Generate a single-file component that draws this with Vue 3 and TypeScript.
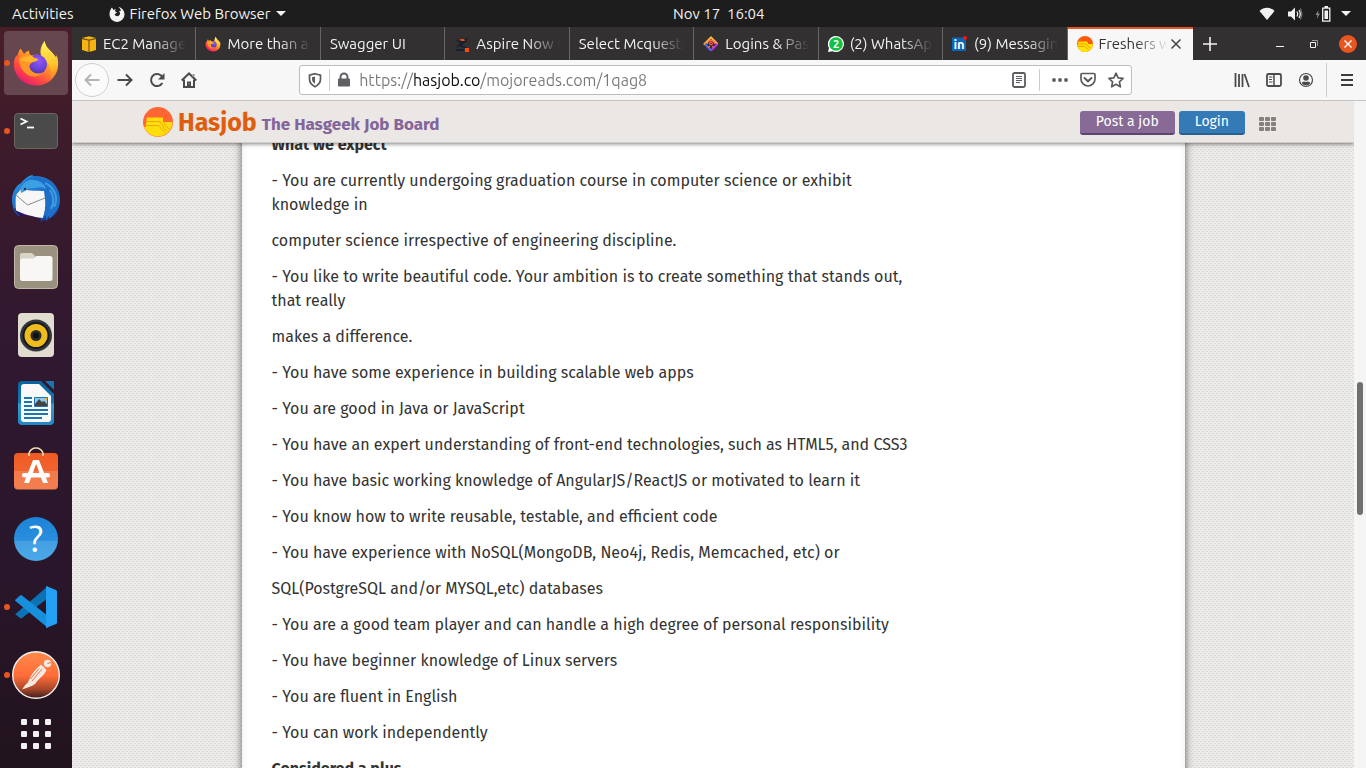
<script setup lang="ts">
import { ref } from 'vue'

interface Tab {
  title: string
  icon: string
}

interface DockApp {
  name: string
  running?: boolean
}

const tabs: Tab[] = [
  { title: 'EC2 Manage', icon: 'ec2' },
  { title: 'More than a', icon: 'firefox' },
  { title: 'Swagger UI', icon: '' },
  { title: 'Aspire Now G', icon: 'aspire' },
  { title: 'Select Mcquesti', icon: '' },
  { title: 'Logins & Pass', icon: 'logins' },
  { title: '(2) WhatsApp', icon: 'whatsapp' },
  { title: '(9) Messaging', icon: 'linkedin' },
]

const apps: DockApp[] = [
  { name: 'Firefox', running: true },
  { name: 'Terminal', running: true },
  { name: 'Thunderbird' },
  { name: 'Files' },
  { name: 'Rhythmbox' },
  { name: 'Writer' },
  { name: 'Software' },
  { name: 'Help' },
  { name: 'Code', running: true },
  { name: 'Postman', running: true },
]

const paragraphs: string[] = [
  '- You are currently undergoing graduation course in computer science or exhibit knowledge in',
  'computer science irrespective of engineering discipline.',
  '- You like to write beautiful code. Your ambition is to create something that stands out, that really',
  'makes a difference.',
  '- You have some experience in building scalable web apps',
  '- You are good in Java or JavaScript',
  '- You have an expert understanding of front-end technologies, such as HTML5, and CSS3',
  '- You have basic working knowledge of AngularJS/ReactJS or motivated to learn it',
  '- You know how to write reusable, testable, and efficient code',
  '- You have experience with NoSQL(MongoDB, Neo4j, Redis, Memcached, etc) or',
  'SQL(PostgreSQL and/or MYSQL,etc) databases',
  '- You are a good team player and can handle a high degree of personal responsibility',
  '- You have beginner knowledge of Linux servers',
  '- You are fluent in English',
  '- You can work independently',
]

const address = ref('https://hasjob.co/mojoreads.com/1qag8')
const cells = [0, 1, 2, 3, 4, 5, 6, 7, 8]
</script>

<template>
  <div class="desktop">
    <svg class="defs" width="0" height="0" aria-hidden="true">
      <defs>
        <linearGradient id="fxBody" x1="0.8" y1="0.1" x2="0.2" y2="1">
          <stop offset="0" stop-color="#ffe84a" />
          <stop offset="0.4" stop-color="#ff9a26" />
          <stop offset="0.7" stop-color="#ff4a40" />
          <stop offset="1" stop-color="#e4127e" />
        </linearGradient>
        <linearGradient id="fxTail" x1="0.5" y1="0" x2="0.6" y2="1">
          <stop offset="0" stop-color="#fff45a" />
          <stop offset="0.6" stop-color="#ffc72e" />
          <stop offset="1" stop-color="#ff8a1e" />
        </linearGradient>
        <radialGradient id="fxGlobe" cx="0.6" cy="0.3" r="0.8">
          <stop offset="0" stop-color="#9059ff" />
          <stop offset="0.6" stop-color="#6640d0" />
          <stop offset="1" stop-color="#41309c" />
        </radialGradient>
        <symbol id="firefox" viewBox="0 0 48 48">
          <path d="M8.500 9.500c1 1.300 2.500 3.500 3.500 5.500 1.600-1.700 3.500-2.900 5-3.500 0 2 .7 4 2 5 3.500-1.500 7.500-.5 10-.5-1.500-4 0-9.500 3.500-14 .7 4.500 3 7 6.500 10.500 3 3 5 5.500 5 5.500.7-.5.4-1.500.3-2.500C46 19 46.500 23 46 27.500 45 38.500 35.500 46.500 24 46.500S1.800 37.500 1.800 25.500c0-4 1.200-7.500 3.200-9.500-.2 1 0 2 .2 2.500.3-3.500 1.500-6.500 3.300-9z" fill="url(#fxBody)" />
          <path d="M32.500 2c.7 4.500 3 7 6.500 10.500 4 4 6.500 9 6 15-.4 5-3 9-7 12 2-5 1.500-11-2-15.500-4-4-9-7-6-15.500z" fill="url(#fxTail)" />
          <circle cx="25" cy="25.500" r="10" fill="url(#fxGlobe)" />
          <path d="M7 20c3-4.500 8-5 12-3.500 2 1 4 3.500 7 3.500.5 1-1.500 2.500-5 3-1.500 1-3.500 2-3.500 4.500.5 5.500 7 8.500 13 6-3.500 4.500-10.500 5.500-16 1.500C9.500 31 7 26 7 20z" fill="#ff9526" />
          <path d="M8 21c3-3 7-3.500 11-4.500 2 1 4 3.500 7 3.500-.5 1.500-2.500 2.500-5.500 3-3.500.5-7 0-12.500-2z" fill="#ffb52c" />
        </symbol>
        <linearGradient id="tbBlue" x1="0" y1="0" x2="0.6" y2="1">
          <stop offset="0" stop-color="#2c9be8" />
          <stop offset="0.6" stop-color="#1c6bc8" />
          <stop offset="1" stop-color="#1b3f9a" />
        </linearGradient>
        <linearGradient id="helpBlue" x1="0" y1="0" x2="0" y2="1">
          <stop offset="0" stop-color="#1b83d8" />
          <stop offset="0.53" stop-color="#2a8edc" />
          <stop offset="0.55" stop-color="#459fe2" />
          <stop offset="1" stop-color="#4aa8e8" />
        </linearGradient>
        <linearGradient id="bag" x1="0" y1="0" x2="0" y2="1">
          <stop offset="0" stop-color="#f15a22" />
          <stop offset="0.48" stop-color="#f0642f" />
          <stop offset="0.5" stop-color="#f27b4b" />
          <stop offset="1" stop-color="#f27e50" />
        </linearGradient>
        <linearGradient id="postman" x1="0" y1="0" x2="0" y2="1">
          <stop offset="0" stop-color="#ff8a4c" />
          <stop offset="0.52" stop-color="#ff6c37" />
          <stop offset="0.8" stop-color="#a8482a" />
          <stop offset="1" stop-color="#3c1c1c" />
        </linearGradient>
        <linearGradient id="writer" x1="0" y1="0" x2="0" y2="1">
          <stop offset="0" stop-color="#0b6399" />
          <stop offset="0.5" stop-color="#1678b4" />
          <stop offset="0.52" stop-color="#3a9ace" />
          <stop offset="1" stop-color="#2288c2" />
        </linearGradient>
        <symbol id="hasjob" viewBox="0 0 30 30">
          <circle cx="15" cy="15" r="15" fill="#ff6633" />
          <path d="M4 10.500h16v4.500h9.500c-.2 8-6.500 14.500-14.500 14.500C8.500 29.500 3 25.500 1 20h1.500z" fill="#ffdd0a" />
          <path d="M3.500 14.500h12.500c3.500 0 3.500 7 7.500 9.500M2.500 18.500h12c3 0 3.500 5 7.500 7M20 15c1 0 2 5 6.500 7" fill="none" stroke="#f4a513" stroke-width="1" />
        </symbol>
        <symbol id="hasjob-small" viewBox="0 0 16 16">
          <circle cx="8" cy="8" r="8" fill="#ff5a0a" />
          <path d="M1.500 5.500h8.500L11.500 8h4.400A8 8 0 0 1 .3 10.500z" fill="#ffe500" />
          <path d="M1 8h7.500c2 0 2 3 5 4M1 10.500h6.500c2 0 2 2.500 4 3" fill="none" stroke="#f59a10" stroke-width="1" />
        </symbol>
      </defs>
    </svg>

    <header class="topbar">
      <div class="topbar-left">
        <button type="button">Activities</button>
        <button type="button" class="app-menu">
          <svg width="16" height="16" viewBox="0 0 16 16" aria-hidden="true">
            <path d="M3 1.500 4.500 4c.8-.6 1.700-.8 2.500-.8-.7.600-1 1.300-1 2L8 6.500c-.6 1-2 1-2.300 1.800.4 1.700 2.400 2.400 4 1.500C11.500 8.600 11.500 6.500 10 5l2-.2C11.500 3 10.500 2 9.500 1c3 .3 6 3.500 6 7.300C15.500 12.500 12 16 8 16S.5 12.500.5 8.300C.5 5.500 1.500 3 3 1.500z" fill="#f2f2f2" />
          </svg>
          <span>Firefox Web Browser</span>
          <i class="caret"></i>
        </button>
      </div>
      <time class="clock">Nov 17&nbsp; 16:04</time>
      <div class="status">
        <svg width="16" height="14" viewBox="0 0 16 14" aria-hidden="true"><path d="M.5 4C5-.3 11-.3 15.500 4L8 13z" fill="#f2f2f2" /></svg>
        <svg width="16" height="16" viewBox="0 0 16 16" aria-hidden="true">
          <path d="M1 5.500h3l4-4v13l-4-4H1z" fill="#f2f2f2" />
          <path d="M10 5.500q1.500 2.500 0 5M12 4q2.500 4 0 8" fill="none" stroke="#f2f2f2" stroke-width="1.300" />
          <path d="M13.500 2.500q3 5.500 0 11" fill="none" stroke="#888" stroke-width="1" />
        </svg>
        <svg width="16" height="16" viewBox="0 0 16 16" aria-hidden="true">
          <path d="M3.500 4 .5 9h2l-.7 4L5 7.500H3z" fill="#8a8a8a" />
          <path d="M7.700 2.200h7.100v13H7.700z" fill="none" stroke="#f2f2f2" stroke-width="1.300" />
          <path d="M9.500 4.500h3.500v8.500H9.500zM9.500 0h3.500v2H9.500z" fill="#f2f2f2" />
        </svg>
        <i class="caret"></i>
      </div>
    </header>

    <nav class="dock" aria-label="Applications">
      <button v-for="app in apps" :key="app.name" type="button" class="launcher" :class="{ current: app.name === 'Firefox' }" :aria-label="app.name">
        <i v-if="app.running" class="dot"></i>
        <svg width="48" height="48" viewBox="0 0 48 48" aria-hidden="true">
          <use v-if="app.name === 'Firefox'" href="#firefox" width="48" height="48" />
          <g v-else-if="app.name === 'Terminal'">
            <rect x="2.500" y="6.500" width="43" height="35" rx="3.500" fill="#4a4a4a" stroke="#6b6660" />
            <path d="M8.500 11.500l6 3-6 3" fill="none" stroke="#fff" stroke-width="1.800" />
            <path d="M15 20.500h7" stroke="#fff" stroke-width="1.800" />
          </g>
          <g v-else-if="app.name === 'Thunderbird'">
            <path d="M9 8c3-4 7-7 11-8 1 .5 1.500 1 1.500 1.500C36 0 48 10 48 25c0 8-3 14-8 17l-3 1-2 3-3-1-4 2 1-3-16-6-6 3C2 38 0 31 0 25c0-7 3-12 6-15z" fill="url(#tbBlue)" />
            <path d="M2 33c2 5 5 8 10 10l-1-3 16 3z" fill="#2a1466" />
            <path d="M4 20l6-7c6 4 12 2 22 3l2 15-3 12C21 42 11 39 4 35.500c-.5-5-.5-11 0-15.500z" fill="#f7f7f8" />
            <path d="M4 20l11.500 10L33 23" fill="none" stroke="#85898f" stroke-width="1" />
            <path d="M9 18c-1-4 1-9 6-11 9-1 20 2 19 12l-1 14c0 4-1 7-2 10l3-3v5l3-4 .5 3C46 36 48 30 48 24 47 10 35 1 21.500 1.500 15 3 8 9 9 18z" fill="#1d6fc9" />
            <path d="M9 18c-.5-6 2-11 8-13 8-1 16 3 17 9-6-4-9 0-14-1-4 0-6 3-11 5z" fill="#3ba0e4" />
            <path d="M38 15c4 6 4 13 1 19M43 18c2 5 1 10-1 14M33 8c5 2 8 6 10 10" fill="none" stroke="#3f9ce0" stroke-width="2" />
            <circle cx="13" cy="14" r="1.300" fill="#432c34" />
          </g>
          <g v-else-if="app.name === 'Files'">
            <rect x="2.500" y="2.500" width="43" height="43" rx="4" fill="#9a917e" stroke="#c0b9a8" />
            <path d="M8 12q0-2 2-2h10l4 4v6H8z" fill="#d9d4c8" />
            <path d="M10.500 15.500H22l2.500-2.500H38q2.500 0 2.500 2.500v20q0 2.500-2.500 2.500H10.500Q8 38 8 35.500V18q0-2.500 2.500-2.500z" fill="#f8f7f5" />
          </g>
          <g v-else-if="app.name === 'Rhythmbox'">
            <rect x="6" y="2" width="36" height="44" rx="4" fill="#e0dcd0" />
            <circle cx="24" cy="24.500" r="16" fill="#33363b" />
            <circle cx="24" cy="24.500" r="13.500" fill="#17181c" />
            <circle cx="24" cy="24.500" r="11.500" fill="#efbc1d" />
            <circle cx="24" cy="24.500" r="5.500" fill="#2b2c2c" />
            <circle cx="24" cy="24.500" r="3" fill="#111" />
          </g>
          <g v-else-if="app.name === 'Writer'">
            <path d="M10 2h19l13 13v27q0 4-4 4H10q-4 0-4-4V6q0-4 4-4z" fill="url(#writer)" />
            <path d="M33 2h9v9z" fill="#1a74ad" />
            <path d="M12 5h15l12 12v23q0 3-3 3H12q-3 0-3-3V8q0-3 3-3z" fill="#f9f9f9" />
            <path d="M12 19h8M12 23h8M12 27h8M12 31h24M12 35h24M12 39h18" stroke="#1b76ae" stroke-width="2" />
            <path d="M22.500 18.500h13v9h-13z" fill="#8ec9ee" stroke="#1b76ae" />
            <path d="M23 27v-2l4-5 3 3 2-1 3 3v2z" fill="#444" />
            <path d="M32 19h3v3z" fill="#f5b81b" />
          </g>
          <g v-else-if="app.name === 'Software'">
            <rect x="2" y="6" width="44" height="36.500" rx="4" fill="url(#bag)" />
            <path d="M17 9V6q2-5 7-5t7 5v3" fill="none" stroke="#f4dcae" stroke-width="1.600" />
            <path d="M21 13h6l9 23h-5l-6.800-19L17 36h-5z" fill="#fff" />
            <rect x="10" y="26" width="28" height="4.500" rx="2.200" fill="#fff" />
          </g>
          <g v-else-if="app.name === 'Help'">
            <circle cx="24" cy="24" r="22" fill="url(#helpBlue)" />
            <text x="24" y="37" text-anchor="middle" font-size="37" fill="#fff">?</text>
          </g>
          <g v-else-if="app.name === 'Code'">
            <path d="M3 31l5 4c1 .5 1.500.5 2 0L36 15V3L3.500 31z" fill="#0b72b5" />
            <path d="M3 17l5-4.500c1-.5 1.500-.5 2 0L36 33v12L3.500 18z" fill="#1690dc" />
            <path d="M34 3l10 4q1 .5 1 1.500v31q0 1-1 1.500l-10 4z" fill="#23a0f4" />
          </g>
          <g v-else>
            <circle cx="24" cy="24" r="23.300" fill="url(#postman)" stroke="#f4eeee" stroke-width="1.400" />
            <circle cx="35.500" cy="12.500" r="3.700" fill="#f6e8e2" />
            <path d="M35.500 12.500l3.500-1" stroke="#e07040" stroke-width="1" />
            <path d="M29 13.500l5.500 5.500c-2 5-7 8-10 12l-6 3 2-4-5 2 2-4c2-5 6-10 11.500-14.500z" fill="#f6e8e2" />
            <path d="M24 29.500c2 4-6 6-14 9 4-6 7-9 14-9z" fill="#f6e8e2" />
            <path d="M30 18l-10 12M27 17.500L18.500 28" stroke="#e8764a" stroke-width="1" />
          </g>
        </svg>
      </button>
      <button type="button" class="show-apps" aria-label="Show Applications">
        <i v-for="cell in cells" :key="cell"></i>
      </button>
    </nav>

    <section class="browser">
      <div class="tabstrip">
        <div class="tabs" role="tablist">
          <button v-for="tab in tabs" :key="tab.title" type="button" role="tab" class="tab">
            <svg v-if="tab.icon" width="16" height="16" viewBox="0 0 16 16" aria-hidden="true">
              <g v-if="tab.icon === 'ec2'">
                <path d="M1 3l6.700 1.500V16L1 14zM15 3L8.300 4.500V16l6.700-2zM1 2l7-1.700L15 2 8 3.700z" fill="#f5b40f" />
                <path d="M1 2.600l7 1.600 7-1.600M8 4v12" fill="none" stroke="#8a6206" stroke-width="0.700" />
              </g>
              <use v-else-if="tab.icon === 'firefox'" href="#firefox" width="16" height="16" />
              <g v-else-if="tab.icon === 'aspire'">
                <path d="M1 4l7 1 6-4-2 5-4 3 5 3v1l-8-3-4 2 5-5z" fill="#17202c" />
                <path d="M2 13h8v2H2z" fill="#17202c" />
                <path d="M6 3h4l1 2H7z" fill="#f04a12" />
                <path d="M11 12h4v4h-4z" fill="#ff4a0a" />
              </g>
              <g v-else-if="tab.icon === 'logins'" fill="none" stroke-width="2">
                <path d="M2 9L1.500 8 8 1.500 14.500 8" stroke="#ffb13b" />
                <path d="M2 8l6 6.500" stroke="#4a6cf7" />
                <path d="M8 14.500L14.500 8" stroke="#b833e1" />
                <path d="M4.500 8a3.500 3.500 0 1 1 7 0M5.500 12l1-2M10.500 12l-1-2" stroke="#ff6a55" stroke-width="1.300" />
                <circle cx="8" cy="7.500" r="1.300" stroke="#ff4f5e" stroke-width="1.200" />
              </g>
              <g v-else-if="tab.icon === 'whatsapp'">
                <path d="M8 0a8 8 0 1 1-3.500 15.200L0 16l1-4A8 8 0 0 1 8 0z" fill="#fff" />
                <circle cx="8" cy="8" r="6.800" fill="#12c143" />
                <text x="8" y="12" text-anchor="middle" font-size="11" font-weight="700" fill="#fff">2</text>
              </g>
              <g v-else>
                <path d="M0 1.500h14V15H0z" fill="#0a66b7" />
                <text x="7" y="13" text-anchor="middle" font-size="13" font-weight="700" fill="#fff">in</text>
                <circle cx="13" cy="2" r="2" fill="#f11" />
              </g>
            </svg>
            <span class="tab-title">{{ tab.title }}</span>
          </button>
          <button type="button" role="tab" class="tab active" aria-selected="true">
            <svg width="16" height="16" aria-hidden="true"><use href="#hasjob-small" width="16" height="16" /></svg>
            <span class="tab-title">Freshers w</span>
            <svg class="tab-close" width="12" height="12" viewBox="0 0 12 12" aria-hidden="true"><path d="M1.500 1.500l9 9M10.500 1.500l-9 9" stroke="#444" stroke-width="1.500" /></svg>
          </button>
        </div>
        <button type="button" class="new-tab" aria-label="New tab">
          <svg width="16" height="16" viewBox="0 0 16 16" aria-hidden="true"><path d="M8 1v14M1 8h14" stroke="#f2f2f2" stroke-width="1.600" /></svg>
        </button>
        <div class="window-buttons">
          <button type="button" aria-label="Minimize"><svg width="18" height="18" viewBox="0 0 18 18"><path d="M5 11.500h8" stroke="#f2f2f2" /></svg></button>
          <button type="button" aria-label="Restore"><svg width="18" height="18" viewBox="0 0 18 18" fill="none"><path d="M5.500 7.500h5v5h-5z" stroke="#f2f2f2" /><path d="M7 5.500h5.500V11" stroke="#999" /></svg></button>
          <button type="button" aria-label="Close"><svg width="18" height="18" viewBox="0 0 18 18"><circle cx="9" cy="9" r="9" fill="#e95420" /><path d="M5.500 5.500l7 7M12.500 5.500l-7 7" stroke="#fff" stroke-width="1.300" /></svg></button>
        </div>
      </div>

      <div class="toolbar">
        <button type="button" class="back" aria-label="Back"><svg width="16" height="16" viewBox="0 0 16 16"><path d="M15.500 8H1.500M7 2.500L1.500 8 7 13.500" fill="none" stroke="#b4b4b4" stroke-width="2" /></svg></button>
        <button type="button" class="tool" aria-label="Forward"><svg width="16" height="16" viewBox="0 0 16 16"><path d="M.5 8h14M9 2.500L14.500 8 9 13.500" fill="none" stroke="#4b4b4e" stroke-width="2" /></svg></button>
        <button type="button" class="tool" aria-label="Reload">
          <svg width="16" height="16" viewBox="0 0 16 16"><path d="M13.300 11A6 6 0 1 1 12 3.500l1.500 2" fill="none" stroke="#4b4b4e" stroke-width="2" /><path d="M15.500 1v6.500H9z" fill="#4b4b4e" /></svg>
        </button>
        <button type="button" class="tool" aria-label="Home">
          <svg width="16" height="16" viewBox="0 0 16 16"><path d="M.7 8.500L8 1.500l7.300 7" fill="none" stroke="#4b4b4e" stroke-width="2" /><path d="M3 7.500V15h10V7.500" fill="none" stroke="#4b4b4e" stroke-width="2" /><path d="M6 9.500h4V15H6z" fill="#4b4b4e" /><path d="M7.500 11h1v1.500h-1zM11.500 2h2v3h-2z" fill="#999" /></svg>
        </button>
        <div class="spring"></div>
        <div class="urlbar">
          <svg width="16" height="16" viewBox="0 0 16 16" aria-hidden="true"><path d="M8 1.700l5.500 1.500v4c0 3.500-2.500 6-5.500 7.500-3-1.500-5.500-4-5.500-7.500v-4z" fill="none" stroke="#5c5c60" stroke-width="1.700" /><path d="M8 4.500v7.200C6 10.500 5 9 5 7V5.200z" fill="#5c5c60" /></svg>
          <i class="rule"></i>
          <svg width="16" height="16" viewBox="0 0 16 16" aria-hidden="true"><path d="M2.500 7h11v7h-11z" fill="#606064" stroke="#606064" stroke-linejoin="round" /><path d="M4.500 7V5a3.500 3.500 0 0 1 7 0v2" fill="none" stroke="#606064" stroke-width="2" /></svg>
          <input v-model="address" type="text" aria-label="Address" spellcheck="false" />
          <button type="button" aria-label="Reader view"><svg width="16" height="16" viewBox="0 0 16 16"><rect x="2" y="1" width="12" height="14" rx="1.500" fill="none" stroke="#5c5c60" stroke-width="1.800" /><path d="M5 4.500h6M5 6.500h6M5 8.500h6M5 10.500h4" stroke="#5c5c60" stroke-width="1" /></svg></button>
          <i class="rule"></i>
          <button type="button" aria-label="Page actions"><svg width="16" height="16" viewBox="0 0 16 16" fill="#5c5c60"><circle cx="2" cy="8" r="1.900" /><circle cx="8" cy="8" r="1.900" /><circle cx="14" cy="8" r="1.900" /></svg></button>
          <button type="button" aria-label="Save to Pocket"><svg width="16" height="16" viewBox="0 0 16 16" fill="none" stroke="#5c5c60"><path d="M1 2.500q0-1 1-1h12q1 0 1 1V7a7 7 0 0 1-14 0z" stroke-width="1.700" /><path d="M4.500 6L8 9.300 11.500 6" stroke-width="2" stroke-linecap="round" /></svg></button>
          <button type="button" aria-label="Bookmark"><svg width="16" height="16" viewBox="0 0 16 16"><path d="M8 1.200l2.100 4.600 5 .6-3.700 3.400 1 5L8 12.300l-4.400 2.500 1-5L.9 6.400l5-.6z" fill="none" stroke="#5c5c60" stroke-width="1.700" stroke-linejoin="round" /></svg></button>
        </div>
        <div class="spring"></div>
        <button type="button" class="tool" aria-label="Library"><svg width="16" height="16" viewBox="0 0 16 16"><path d="M1.500 1v14M5 2v13M8.500 2v13M10.500 2l4.500 13" fill="none" stroke="#4b4b4e" stroke-width="1.800" /></svg></button>
        <button type="button" class="tool" aria-label="Sidebars"><svg width="16" height="16" viewBox="0 0 16 16" fill="none" stroke="#4b4b4e"><rect x="1" y="2" width="14" height="12" rx="1.500" stroke-width="1.800" /><path d="M8 2v12" stroke-width="1.500" /><path d="M3 5h3.500M3 7.500h3M3 10h3.500" stroke-width="1" /></svg></button>
        <button type="button" class="tool" aria-label="Account"><svg width="16" height="16" viewBox="0 0 16 16"><circle cx="8" cy="8" r="6.500" fill="none" stroke="#4b4b4e" stroke-width="1.200" /><circle cx="8" cy="6" r="2.800" fill="#4b4b4e" /><path d="M3.500 11q1-1.500 2.500-1.500 2 .8 4 0 1.500 0 2.500 1.500-2 2.500-4.500 2.500T3.500 11z" fill="#4b4b4e" /></svg></button>
        <i class="rule tall"></i>
        <button type="button" class="tool menu" aria-label="Menu"><svg width="16" height="16" viewBox="0 0 16 16"><path d="M2 3h12M2 8h12M2 13h12" stroke="#3c3c3f" stroke-width="2" /></svg></button>
      </div>

      <div class="viewport">
        <div class="page">
          <header class="site-header">
            <div class="site-inner">
              <a href="#" class="brand">
                <svg width="30" height="30" aria-hidden="true"><use href="#hasjob" width="30" height="30" /></svg>
                <span class="brand-name">Hasjob</span>
                <span class="brand-tag">The Hasgeek Job Board</span>
              </a>
              <div class="site-actions">
                <button type="button" class="btn purple">Post a job</button>
                <button type="button" class="btn blue">Login</button>
                <button type="button" class="grid-button" aria-label="More sites"><i v-for="cell in cells" :key="cell"></i></button>
              </div>
            </div>
          </header>
          <main class="sheet">
            <article class="posting">
              <p><strong>What we expect</strong></p>
              <p v-for="text in paragraphs" :key="text">{{ text }}</p>
              <p><strong>Considered a plus</strong></p>
            </article>
          </main>
        </div>
        <div class="scrollbar"><i></i></div>
      </div>
    </section>
  </div>
</template>

<style>
body {
  overflow: hidden;
}
</style>

<style scoped>
* {
  box-sizing: border-box;
}

.desktop {
  display: grid;
  grid-template: 27px minmax(0, 1fr) / 72px minmax(0, 1fr);
  height: 100vh;
  overflow: hidden;
  font-family: Ubuntu, "Noto Sans", sans-serif;
  font-size: 15px;
}

.defs {
  position: absolute;
}

button {
  display: flex;
  align-items: center;
  justify-content: center;
  padding: 0;
  border: 0;
  background: none;
  color: inherit;
  font: inherit;
  white-space: nowrap;
}

svg {
  flex: none;
}

/* Desktop top bar */
.topbar {
  grid-column: 1 / -1;
  display: grid;
  grid-template-columns: calc(50% - 10px) auto 1fr;
  align-items: center;
  background: #1d1d1d;
  color: #f2f2f2;
}

.topbar-left {
  display: flex;
  gap: 35px;
  padding-left: 12px;
}

.app-menu {
  gap: 5px;
}

.caret {
  border: 5px solid transparent;
  border-top-color: #f2f2f2;
  border-bottom: 0;
}

.status {
  display: flex;
  align-items: center;
  justify-content: flex-end;
  gap: 12px;
  padding-right: 15px;
}

.status .caret {
  margin-left: -2px;
}

/* Launcher column */
.dock {
  display: flex;
  flex-direction: column;
  align-items: center;
  padding-top: 4px;
  gap: 4px;
  background: linear-gradient(#481f29, #3a1a2b 20%, #2f1830 45%, #29162a 75%, #21131d);
}

.launcher {
  position: relative;
  flex: none;
  width: 64px;
  height: 64px;
  border-radius: 4px;
}

.launcher.current {
  background: #67474f;
}

.dot {
  position: absolute;
  left: 0;
  width: 6px;
  height: 6px;
  border-radius: 3px;
  background: #e95420;
}

.show-apps {
  display: grid;
  grid-template-columns: repeat(3, 6px);
  gap: 6px;
  margin-top: 8px;
}

.show-apps i {
  height: 6px;
  border-radius: 1px;
  background: #f2f0f0;
}

/* Browser tabs */
.browser {
  display: flex;
  flex-direction: column;
  min-width: 0;
  min-height: 0;
}

.tabstrip {
  display: flex;
  flex: none;
  height: 33px;
  background: #323031;
  color: #f4f4f4;
}

.tabs {
  display: flex;
  flex: 1;
  min-width: 0;
}

.tab {
  flex: 1 1 0;
  min-width: 0;
  justify-content: flex-start;
  gap: 6px;
  padding: 0 9px;
  border-right: 1px solid #666465;
}

.tab-title {
  flex: 1;
  overflow: hidden;
  text-align: left;
  -webkit-mask-image: linear-gradient(to left, transparent, #000 32px);
  mask-image: linear-gradient(to left, transparent, #000 32px);
}

.tab.active {
  padding-right: 11px;
  border: 0;
  box-shadow: inset 0 2px #e95420;
  background: #f7f7f7;
  color: #333;
}

.tab-close {
  margin-left: -4px;
}

.new-tab {
  width: 34px;
}

.window-buttons {
  display: flex;
  align-items: center;
  gap: 16px;
  margin-left: 44px;
  padding-right: 9px;
}

/* Navigation toolbar */
.toolbar {
  display: flex;
  flex: none;
  align-items: center;
  height: 41px;
  padding: 0 3px;
  border-bottom: 1px solid #c4c4c4;
  background: #f7f7f7;
}

.back {
  width: 34px;
  height: 34px;
  border: 1px solid #cfcfcf;
  border-radius: 50%;
  background: #fbfbfb;
}

.tool {
  width: 32px;
  height: 32px;
}

.spring {
  flex: 3;
}

.urlbar {
  display: flex;
  flex: 26;
  align-items: center;
  gap: 12px;
  min-width: 0;
  height: 30px;
  padding: 0 7px;
  border: 1px solid #bdbdbd;
  border-radius: 3px;
  background: #fff;
}

.urlbar > svg:nth-of-type(2) {
  margin-left: -6px;
}

.urlbar > .rule:first-of-type {
  margin-left: -6px;
}

.rule {
  width: 1px;
  height: 22px;
  background: #ccc;
}

.rule.tall {
  height: 34px;
  margin: 0 4px;
}

.urlbar input {
  flex: 1;
  min-width: 0;
  height: 28px;
  margin-left: -5px;
  padding: 0;
  border: 0;
  outline: 0;
  background: linear-gradient(90deg, #777 54px, #0c0c0d 54px, #0c0c0d 121px, #777 121px);
  -webkit-background-clip: text;
  background-clip: text;
  -webkit-text-fill-color: transparent;
  font: inherit;
  font-size: 16px;
}

/* Web page */
.viewport {
  display: flex;
  flex: 1;
  min-height: 0;
}

.page {
  position: relative;
  flex: 1;
  min-width: 0;
  overflow: hidden;
  background-color: #ebeae8;
  background-image:
    conic-gradient(at 2px 1px, transparent 75%, #dcdbd9 0),
    conic-gradient(at 2px 1px, transparent 75%, #dedddb 0),
    conic-gradient(at 1px 2px, transparent 75%, #f1f0ef 0);
  background-position: 0 0, 2px 2px, 1px 1px;
  background-size: 4px 4px, 4px 4px, 6px 5px;
  color: #333;
  font-family: "Fira Sans", Roboto, sans-serif;
  font-size: 16px;
  line-height: 24px;
}

.site-header {
  position: absolute;
  z-index: 1;
  inset: 0 0 auto;
  height: 42px;
  border-bottom: 1px solid #d0ccc9;
  box-shadow: 0 1px 4px rgba(0, 0, 0, 0.5);
  background: #ebe7e4;
}

.site-inner {
  display: flex;
  align-items: center;
  justify-content: space-between;
  max-width: 1140px;
  height: 100%;
  margin: 0 auto;
}

.brand {
  display: flex;
  align-items: center;
  gap: 5px;
  font-weight: 700;
  text-decoration: none;
}

.brand-name {
  padding-top: 2px;
  color: #df5e0e;
  font-size: 25px;
}

.brand-tag {
  padding-top: 6px;
  color: #83659a;
  font-size: 17px;
}

.site-actions {
  display: flex;
  align-items: center;
  gap: 4px;
  padding: 2px 7px 0 0;
}

.btn {
  height: 24px;
  padding: 1px 16px 0;
  border-bottom: 2px solid;
  border-radius: 3px;
  color: #fff;
  font-size: 14px;
}

.btn.purple {
  border-color: #5c4570;
  background: #876a95;
}

.btn.blue {
  border-color: #25608f;
  background: #337ab7;
}

.grid-button {
  display: grid;
  grid-template-columns: repeat(3, 5px);
  gap: 1px;
  margin-left: 10px;
  padding-top: 2px;
}

.grid-button i {
  height: 4px;
  border-radius: 1px;
  background: #85807c;
}

.sheet {
  max-width: 943px;
  min-height: 100%;
  margin: 0 auto;
  padding: 32px 30px;
  box-shadow: 0 0 8px rgba(0, 0, 0, 0.6), inset 0 0 8px rgba(0, 0, 0, 0.08);
  background: #fff;
}

.posting {
  max-width: 644px;
}

.posting p {
  margin: 0 0 12px;
}

.scrollbar {
  flex: none;
  width: 12px;
  padding-left: 3px;
  background: #f5f5f5;
}

.scrollbar i {
  display: block;
  width: 6px;
  height: 20%;
  margin-top: 281px;
  border-radius: 3px;
  background: #6f7070;
}
</style>
